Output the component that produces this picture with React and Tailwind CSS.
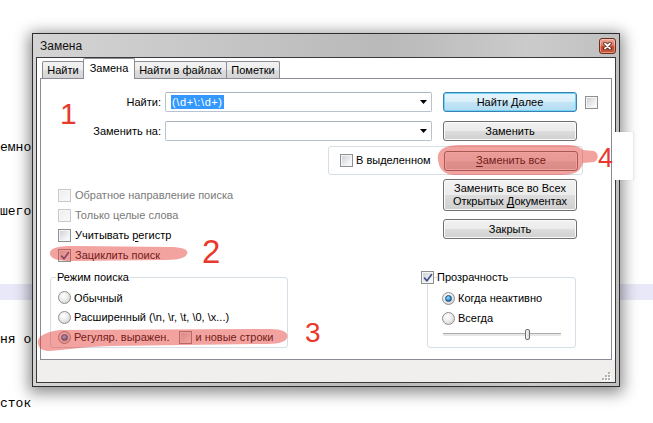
import React from "react";

const SANS = "font-['Liberation_Sans',Arial,sans-serif]";

function Check({ checked, disabled, className = "" }) {
  return (
    <span
      className={`relative flex-none w-[13px] h-[13px] border ${
        disabled
          ? "border-[#c9c9c9] bg-[linear-gradient(135deg,#ececec,#fbfbfb)]"
          : "border-[#8e8f8f] bg-[linear-gradient(135deg,#c9cdd3,#f2f3f4_70%,#fdfdfd)]"
      } shadow-[inset_0_0_0_1px_#f6f6f6] ${className}`}
    >
      {checked && (
        <svg className="absolute left-[1px] top-[1px]" width="10" height="10" viewBox="0 0 10 10">
          <path d="M1.6 5.2 L4 7.8 L8.6 1.6" fill="none" stroke="#40528a" strokeWidth="1.7" strokeLinecap="round" strokeLinejoin="round" />
        </svg>
      )}
    </span>
  );
}

function Radio({ checked, className = "" }) {
  return (
    <span
      className={`flex-none w-[13px] h-[13px] rounded-full border border-[#8e8f8f] bg-[radial-gradient(circle_at_40%_35%,#ffffff_0%,#ececec_45%,#c6c6c6_100%)] flex items-center justify-center ${className}`}
    >
      {checked && (
        <span className="w-[7px] h-[7px] rounded-full border border-[#1d4f86] bg-[radial-gradient(circle_at_40%_35%,#a6e4ff_0%,#2f8fd2_55%,#134c8a_100%)]" />
      )}
    </span>
  );
}

function Btn({ children, def, className = "", h = "h-[20px]" }) {
  const look = def
    ? "border-[#3c7fb1] bg-[linear-gradient(#e8f5fc_0%,#d8eef9_50%,#c4e5f6_51%,#b3dcf2_100%)] shadow-[inset_0_0_0_1px_#6fd5f7]"
    : "border-[#707070] bg-[linear-gradient(#f2f2f2_0%,#ebebeb_50%,#dddddd_51%,#cfcfcf_100%)] shadow-[inset_0_0_0_1px_#fbfbfb]";
  return (
    <div
      className={`flex-none flex items-center justify-center w-[134px] ${h} rounded-[3px] border ${look} text-[11px] leading-[13px] text-black text-center ${className}`}
    >
      {children}
    </div>
  );
}

function Combo({ children, className = "" }) {
  return (
    <div
      className={`flex-none flex items-center w-[267px] h-[20px] rounded-[2px] border border-[#b7c3cf] border-t-[#abb5c0] bg-white pl-[5px] pr-[4px] ${className}`}
    >
      <div className="flex-1 flex items-center">{children}</div>
      <svg width="7" height="4" viewBox="0 0 7 4">
        <path d="M0 0 H7 L3.5 4 Z" fill="#000" />
      </svg>
    </div>
  );
}

function Tab({ children, sel, className = "" }) {
  return sel ? (
    <div
      className={`relative z-10 -mb-px h-[21px] flex items-center justify-center border border-b-0 border-[#898c95] bg-white rounded-t-[2px] pb-[2px] ${className}`}
    >
      {children}
    </div>
  ) : (
    <div
      className={`h-[17px] flex items-center justify-center border border-b-0 border-[#898c95] rounded-t-[2px] bg-[linear-gradient(#f3f3f3,#ebebeb_50%,#dedede_51%,#d4d4d4)] ${className}`}
    >
      {children}
    </div>
  );
}

const lines = [
  "емно:",
  "", "", "",
  "шего",
  "", "", "", "",
  "#band",
  "", "",
  "ня оч",
  "", "", "",
  "сток",
];

export default function App() {
  return (
    <div className="relative w-[653px] h-[423px] overflow-hidden bg-white">
      {/* editor text behind */}
      <div className="pt-[140px] font-['Liberation_Mono','Courier_New',monospace] text-[13px] leading-[16px] text-black whitespace-pre">
        {lines.map((t, i) =>
          t === "#band" ? (
            <div key={i} className="h-[16px] bg-[#e8e8f9]" />
          ) : (
            <div key={i} className="h-[16px]">{t}</div>
          )
        )}
      </div>

      {/* dialog window */}
      <div
        className={`absolute left-[32px] top-[33px] w-[588px] h-[354px] border border-[#2e2e2e] bg-[linear-gradient(90deg,#d4d4d4,#c2c2c2_40%,#b9b9b9_60%,#cbcbcb_85%,#c0c0c0)] shadow-[0_3px_14px_3px_rgba(0,0,0,0.45)] flex flex-col px-[3px] pb-[3px] ${SANS} text-[11px] text-black`}
      >
        <div className="h-[23px] flex items-center justify-between pl-[4px]">
          <span className="text-[12px] text-[#111]">Замена</span>
          <div className="w-[17px] h-[16px] rounded-[3px] border border-[#6e2b1e] bg-[linear-gradient(#eba896_0%,#dc7a60_45%,#c9482c_55%,#c55a3c_100%)] shadow-[inset_0_0_0_1px_rgba(255,220,200,0.5)] flex items-center justify-center">
            <svg width="9" height="8" viewBox="0 0 9 8">
              <path d="M2 1.5 L7 6.5 M7 1.5 L2 6.5" stroke="#4a1a10" strokeWidth="3.4" strokeLinecap="round" />
              <path d="M2 1.5 L7 6.5 M7 1.5 L2 6.5" stroke="#ffffff" strokeWidth="1.8" strokeLinecap="round" />
            </svg>
          </div>
        </div>

        {/* client area */}
        <div className="flex-1 border border-[#3a3a3a] bg-white flex flex-col">
          {/* tabs */}
          <div className="h-[20px] flex items-end pl-[5px]">
            <Tab className="w-[42px]">Найти</Tab>
            <Tab sel className="w-[52px] -ml-px">Замена</Tab>
            <Tab className="w-[93px] -ml-px">Найти в файлах</Tab>
            <Tab className="w-[54px] -ml-px">Пометки</Tab>
          </div>

          {/* tab panel */}
          <div className="mx-[3px] h-[282px] border border-[#898c95] bg-white flex flex-col">
            {/* find row */}
            <div className="flex items-center h-[20px] mt-[13px]">
              <div className="w-[120px] text-right">Найти:</div>
              <Combo className="ml-[4px]">
                <span className="bg-[#3399ff] text-white leading-[14px] tracking-[0.6px] px-[1px]">(\d+\:\d+)</span>
              </Combo>
              <Btn def className="ml-[11px]">Найти Далее</Btn>
              <Check className="ml-[8px]" />
            </div>

            {/* replace row */}
            <div className="flex items-center h-[20px] mt-[9px]">
              <div className="w-[120px] text-right">Заменить на:</div>
              <Combo className="ml-[4px]" />
              <Btn className="ml-[11px]">Заменить</Btn>
            </div>

            {/* in selection group */}
            <div className="mt-[5px] ml-[287px] w-[255px] h-[29px] border border-[#d5dfe5] rounded-[3px] flex items-center pl-[11px] pr-[4px]">
              <Check />
              <span className="ml-[3px]">В выделенном</span>
              <Btn className="ml-auto">
                <span>
                  <span className="underline underline-offset-[2px]">З</span>аменить все
                </span>
              </Btn>
            </div>

            {/* options + buttons */}
            <div className="mt-[4px] flex">
              <div className="w-[402px] pt-[6px] pl-[17px] flex flex-col">
                <div className="h-[20px] flex items-center gap-[4px] text-[#7a7a7a]">
                  <Check disabled />
                  <span>Обратное направление поиска</span>
                </div>
                <div className="h-[20px] flex items-center gap-[4px] text-[#7a7a7a]">
                  <Check disabled />
                  <span>Только целые слова</span>
                </div>
                <div className="h-[20px] flex items-center gap-[4px]">
                  <Check />
                  <span>
                    Учитывать <span className="underline underline-offset-[2px]">р</span>егистр
                  </span>
                </div>
                <div className="h-[20px] flex items-center gap-[4px]">
                  <Check checked />
                  <span>Зациклить поиск</span>
                </div>
              </div>
              <div className="flex flex-col">
                <Btn h="h-[32px]">
                  <span>
                    Заменить все во Всех
                    <br />
                    Открытых <span className="underline underline-offset-[2px]">Д</span>окументах
                  </span>
                </Btn>
                <Btn className="mt-[8px]">Закрыть</Btn>
              </div>
            </div>

            {/* bottom groups */}
            <div className="mt-[5px] flex items-start">
              <div className="ml-[9px] flex flex-col">
                <div className="h-[14px] flex items-center relative z-10">
                  <span className="ml-[6px] px-[1px] bg-white leading-[13px]">Режим поиска</span>
                </div>
                <div className="-mt-[7px] w-[238px] h-[71px] border border-[#d5dfe5] rounded-[3px] pt-[10px] pl-[7px] flex flex-col">
                  <div className="h-[20px] flex items-center gap-[3px]">
                    <Radio />
                    <span>Обычный</span>
                  </div>
                  <div className="h-[20px] flex items-center gap-[3px]">
                    <Radio />
                    <span>Расширенный (\n, \r, \t, \0, \x...)</span>
                  </div>
                  <div className="h-[20px] flex items-center">
                    <Radio checked />
                    <span className="ml-[3px]">Регуляр. выражен.</span>
                    <Check className="ml-[10px]" />
                    <span className="ml-[3px]">и новые строки</span>
                  </div>
                </div>
              </div>

              <div className="ml-[133px] flex flex-col">
                <div className="h-[14px] flex items-center gap-[3px] relative z-10">
                  <Check checked />
                  <span className="bg-white pr-[1px] leading-[13px]">Прозрачность</span>
                </div>
                <div className="ml-[6px] -mt-[7px] w-[149px] h-[71px] border border-[#d5dfe5] rounded-[3px] pt-[10px] pl-[14px] flex flex-col">
                  <div className="h-[20px] flex items-center gap-[3px]">
                    <Radio checked />
                    <span>Когда неактивно</span>
                  </div>
                  <div className="h-[20px] flex items-center gap-[3px]">
                    <Radio />
                    <span>Всегда</span>
                  </div>
                  <div className="h-[12px] ml-[1px] flex items-center">
                    <div className="relative w-[118px] h-[3px] border-t border-[#acacac] bg-[#e6e8e8]">
                      <div className="absolute left-[82px] -top-[5px] w-[5px] h-[11px] rounded-[2px] border border-[#6f6f6f] bg-[linear-gradient(90deg,#f7f7f7,#dadada)]" />
                    </div>
                  </div>
                </div>
              </div>
            </div>
          </div>

          {/* status bar */}
          <div className="flex-1 bg-[#f0efed] flex items-end justify-end pr-[4px] pb-[1px]">
            <svg width="9" height="9" viewBox="0 0 9 9">
              {[
                [6, 0],
                [6, 3],
                [3, 3],
                [6, 6],
                [3, 6],
                [0, 6],
              ].map(([x, y], i) => (
                <g key={i}>
                  <rect x={x + 1} y={y + 1} width="2" height="2" fill="#ffffff" />
                  <rect x={x} y={y} width="2" height="2" fill="#b4b1ab" />
                </g>
              ))}
            </svg>
          </div>
        </div>
      </div>

      {/* annotation: white patch over frame */}
      <div className="absolute left-[612px] top-[132px] w-[21px] h-[48px] bg-white rounded-[2px] shadow-[1px_0_2px_rgba(0,0,0,0.08)]" />

      {/* annotation: marker strokes */}
      <svg className="absolute left-0 top-0 pointer-events-none" width="653" height="423" viewBox="0 0 653 423">
        <g fill="rgba(228,60,55,0.48)">
          <path d="M50 254 C49 248 58 246 75 246 L170 247 C183 247 189 250 187 254 C185 259 176 260 160 260 L72 261 C58 261 51 259 50 254 Z" />
          <path d="M38 344 C36 337 45 332 60 330 L270 329 C284 329 289 333 287 338 C285 343 276 344 262 344 L110 346 C82 347 64 350 49 351 C42 351 39 348 38 344 Z" />
          <path d="M438 160 C436 150 445 145 460 145 L566 145 C575 145 580 147 583 150 L594 151 C599 153 599 160 594 162 L583 163 C581 171 575 175 562 175 L455 175 C443 175 439 168 438 160 Z" />
        </g>
      </svg>

      {/* annotation numbers */}
      <div className={`absolute left-[60px] top-[99px] text-[30px] leading-none text-[#e8392d] ${SANS}`}>1</div>
      <div className={`absolute left-[202px] top-[235px] text-[33px] leading-none text-[#e8392d] ${SANS}`}>2</div>
      <div className={`absolute left-[305px] top-[319px] text-[28px] leading-none text-[#e8392d] ${SANS}`}>3</div>
      <div className={`absolute left-[598px] top-[145px] text-[27px] leading-none text-[#e8392d] ${SANS}`}>4</div>
    </div>
  );
}
